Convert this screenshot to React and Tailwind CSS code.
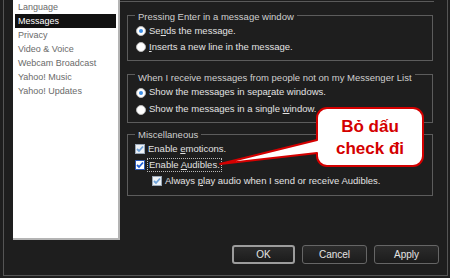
const font = { fontFamily: '"Liberation Sans", Arial, sans-serif' }

const items = ['Language', 'Messages', 'Privacy', 'Video & Voice', 'Webcam Broadcast', 'Yahoo! Music', 'Yahoo! Updates']

function Radio({ on }) {
  return (
    <span className="w-[10px] h-[10px] rounded-full bg-white border border-[#b8b8b8] flex items-center justify-center shrink-0">
      {on && <span className="w-[4px] h-[4px] rounded-full bg-[#3d8ee6]" />}
    </span>
  )
}

function Check({ strong }) {
  return (
    <span className={'w-[10px] h-[10px] flex items-center justify-center shrink-0 border ' + (strong ? 'bg-white border-[#2a55b0]' : 'bg-[#eef2f6] border-[#9aa8b8]')}>
      <svg width="8" height="8" viewBox="0 0 8 8">
        <path d="M1 4 L3 6 L7 1.5" fill="none" stroke={strong ? '#1f5fd8' : '#6fa3da'} strokeWidth="1.8" />
      </svg>
    </span>
  )
}

function Group({ label, className, children }) {
  return (
    <div className={'ml-[7px] w-[306px] border border-[#5c5c5c] ' + className}>
      <span className="block w-fit ml-[7px] -mt-[7px] px-[3px] bg-[#1e1e1e] leading-[12px] text-[9.5px] text-[#cfcfcf]">{label}</span>
      {children}
    </div>
  )
}

function Btn({ label, focus, w }) {
  return (
    <button className={'h-[19px] rounded-[3px] bg-gradient-to-b from-[#2c2c2c] to-[#1c1c1c] text-[10px] text-[#e4e4e4] ' + w + ' ' + (focus ? 'border-2 border-[#9c9c9c]' : 'border border-[#666]')}>
      {label}
    </button>
  )
}

export default function App() {
  return (
    <div className="w-[450px] h-[278px] bg-[#1e1e1e] relative overflow-hidden" style={font}>
      <div className="ml-[3px] w-[445px] h-[276px] border-l border-r border-b border-[#555] flex">
        {/* left menu */}
        <div className="ml-[9px] w-[107px] h-[240px] bg-white border-r-2 border-b-2 border-[#b4b4b4] px-[2px]">
          {items.map((it, i) => (
            <div key={i} className={'h-[14px] pl-[3px] text-[9px] leading-[14px] ' + (i === 1 ? 'bg-[#111] text-white' : 'text-[#6a6a6a]')}>
              {it}
            </div>
          ))}
        </div>

        {/* settings */}
        <div className="flex-1 flex flex-col text-[9.5px] text-[#e2e2e2]">
          <div className="mt-[1px] w-[314px] h-px bg-[#5a5a5a]" />

          <Group label="Pressing Enter in a message window" className="mt-[13px] h-[46px] pt-[2px]">
            <div className="h-[16px] flex items-center pl-[8px] gap-[3px]">
              <Radio on />
              <span>Se<u>n</u>ds the message.</span>
            </div>
            <div className="h-[16px] flex items-center pl-[8px] gap-[3px]">
              <Radio />
              <span><u>I</u>nserts a new line in the message.</span>
            </div>
          </Group>

          <Group label="When I receive messages from people not on my Messenger List" className="mt-[13px] h-[49px] pt-[4px]">
            <div className="h-[17px] flex items-center pl-[8px] gap-[3px]">
              <Radio on />
              <span>Show the messages in sepa<u>r</u>ate windows.</span>
            </div>
            <div className="h-[17px] flex items-center pl-[8px] gap-[3px]">
              <Radio />
              <span>Show the messages in a single <u>w</u>indow.</span>
            </div>
          </Group>

          <Group label="Miscellaneous" className="mt-[11px] h-[62px] pt-[1px]">
            <div className="h-[16px] flex items-center pl-[7px] gap-[3px]">
              <Check />
              <span>Enable <u>e</u>moticons.</span>
            </div>
            <div className="h-[16px] flex items-center pl-[7px] gap-[2px]">
              <Check strong />
              <span className="border border-dotted border-[#bbb] px-px leading-[12px]">Enable <u>A</u>udibles.</span>
            </div>
            <div className="h-[16px] flex items-center pl-[24px] gap-[3px]">
              <Check />
              <span>Always <u>p</u>lay audio when I send or receive Audibles.</span>
            </div>
          </Group>

          <div className="mt-[49px] ml-[112px] flex gap-[7px]">
            <Btn label="OK" focus w="w-[63px]" />
            <Btn label="Cancel" w="w-[65px]" />
            <Btn label="Apply" w="w-[65px]" />
          </div>
        </div>
      </div>

      {/* callout */}
      <div className="absolute left-[218px] top-[106px] w-[208px] h-[62px]">
        <svg className="absolute inset-0" width="208" height="62" viewBox="0 0 208 62">
          <path
            d="M109 2 H195 A10 10 0 0 1 205 12 V50 A10 10 0 0 1 195 60 H109 A10 10 0 0 1 99 50 V47 L2 58 L99 34 V12 A10 10 0 0 1 109 2 Z"
            fill="#fff"
            stroke="#d40000"
            strokeWidth="2"
            strokeLinejoin="round"
          />
        </svg>
        <div className="relative ml-[99px] w-[106px] pt-[10px] text-center font-bold text-[17px] leading-[22px] text-[#d40000]">
          <div>Bỏ dấu</div>
          <div>check đi</div>
        </div>
      </div>
    </div>
  )
}
